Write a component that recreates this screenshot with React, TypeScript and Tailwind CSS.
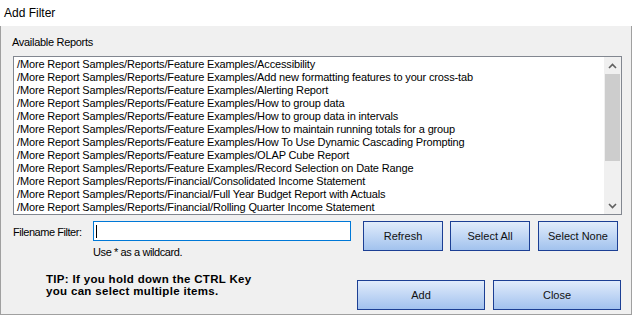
import React from "react";

const reports = [
  "/More Report Samples/Reports/Feature Examples/Accessibility",
  "/More Report Samples/Reports/Feature Examples/Add new formatting features to your cross-tab",
  "/More Report Samples/Reports/Feature Examples/Alerting Report",
  "/More Report Samples/Reports/Feature Examples/How to group data",
  "/More Report Samples/Reports/Feature Examples/How to group data in intervals",
  "/More Report Samples/Reports/Feature Examples/How to maintain running totals for a group",
  "/More Report Samples/Reports/Feature Examples/How To Use Dynamic Cascading Prompting",
  "/More Report Samples/Reports/Feature Examples/OLAP Cube Report",
  "/More Report Samples/Reports/Feature Examples/Record Selection on Date Range",
  "/More Report Samples/Reports/Financial/Consolidated Income Statement",
  "/More Report Samples/Reports/Financial/Full Year Budget Report with Actuals",
  "/More Report Samples/Reports/Financial/Rolling Quarter Income Statement",
];

function WinButton({ label, className }: { label: string; className: string }) {
  return (
    <div
      className={
        "flex items-center justify-center border border-[#1c3f94] bg-gradient-to-b from-[#e1ecfb] to-[#a2c2ee] text-[11px] text-[#111] " +
        className
      }
    >
      {label}
    </div>
  );
}

function Chevron({ up }: { up: boolean }) {
  return (
    <svg width="9" height="6" viewBox="0 0 9 6">
      <path
        d={up ? "M1 5 L4.5 1.5 L8 5" : "M1 1 L4.5 4.5 L8 1"}
        fill="none"
        stroke="#606060"
        strokeWidth="1.6"
      />
    </svg>
  );
}

export default function App() {
  return (
    <div className="w-[632px] h-[315px] flex flex-col font-['Liberation_Sans',Arial,sans-serif] text-black">
      <div className="h-[26px] bg-white flex items-center pl-[4px] text-[12px] shrink-0">
        Add Filter
      </div>
      <div className="flex-1 bg-[#f0f0f0] border-l border-r border-b border-[#a0a0a0] flex flex-col">
        <div className="ml-[11px] mt-[10px] h-[13px] leading-[13px] text-[11px] tracking-[-0.3px]">
          Available Reports
        </div>
        <div className="ml-[12px] mt-[7px] w-[609px] h-[159px] border border-[#828790] bg-white flex">
          <div className="flex-1 pl-[3px] pt-[1px] overflow-hidden">
            {reports.map((r) => (
              <div
                key={r}
                className="h-[13px] leading-[13px] text-[11px] tracking-[-0.15px] whitespace-nowrap"
              >
                {r}
              </div>
            ))}
          </div>
          <div className="w-[17px] bg-[#f0f0f0] flex flex-col">
            <div className="h-[17px] flex items-center justify-center">
              <Chevron up />
            </div>
            <div className="h-[87px] mx-[1px] bg-[#cdcdcd]" />
            <div className="flex-1" />
            <div className="h-[17px] flex items-center justify-center">
              <Chevron up={false} />
            </div>
          </div>
        </div>
        <div className="mt-[6px] flex items-start">
          <div className="flex flex-col">
            <div className="flex items-center">
              <div className="ml-[12px] w-[80px] h-[20px] pt-[2px] flex items-center text-[11px] tracking-[-0.45px]">
                Filename Filter:
              </div>
              <div className="w-[258px] h-[20px] border border-[#0078d7] bg-white flex items-center pl-[2px]">
                <div className="w-[1px] h-[13px] bg-black" />
              </div>
            </div>
            <div className="ml-[92px] mt-[5px] h-[13px] leading-[13px] text-[11px] tracking-[-0.4px]">
              Use * as a wildcard.
            </div>
          </div>
          <WinButton label="Refresh" className="ml-[12px] w-[80px] h-[30px]" />
          <WinButton label="Select All" className="ml-[7px] w-[80px] h-[30px]" />
          <WinButton label="Select None" className="ml-[8px] w-[80px] h-[30px]" />
        </div>
        <div className="mt-[14px] flex items-start">
          <div className="ml-[45px] text-[11.5px] font-bold leading-[12px] tracking-[0.32px]">
            <div>TIP: If you hold down the CTRL Key</div>
            <div>you can select multiple items.</div>
          </div>
          <div className="ml-auto mr-[10px] mt-[7px] flex gap-[8px]">
            <WinButton label="Add" className="w-[128px] h-[30px]" />
            <WinButton label="Close" className="w-[128px] h-[30px]" />
          </div>
        </div>
      </div>
    </div>
  );
}
